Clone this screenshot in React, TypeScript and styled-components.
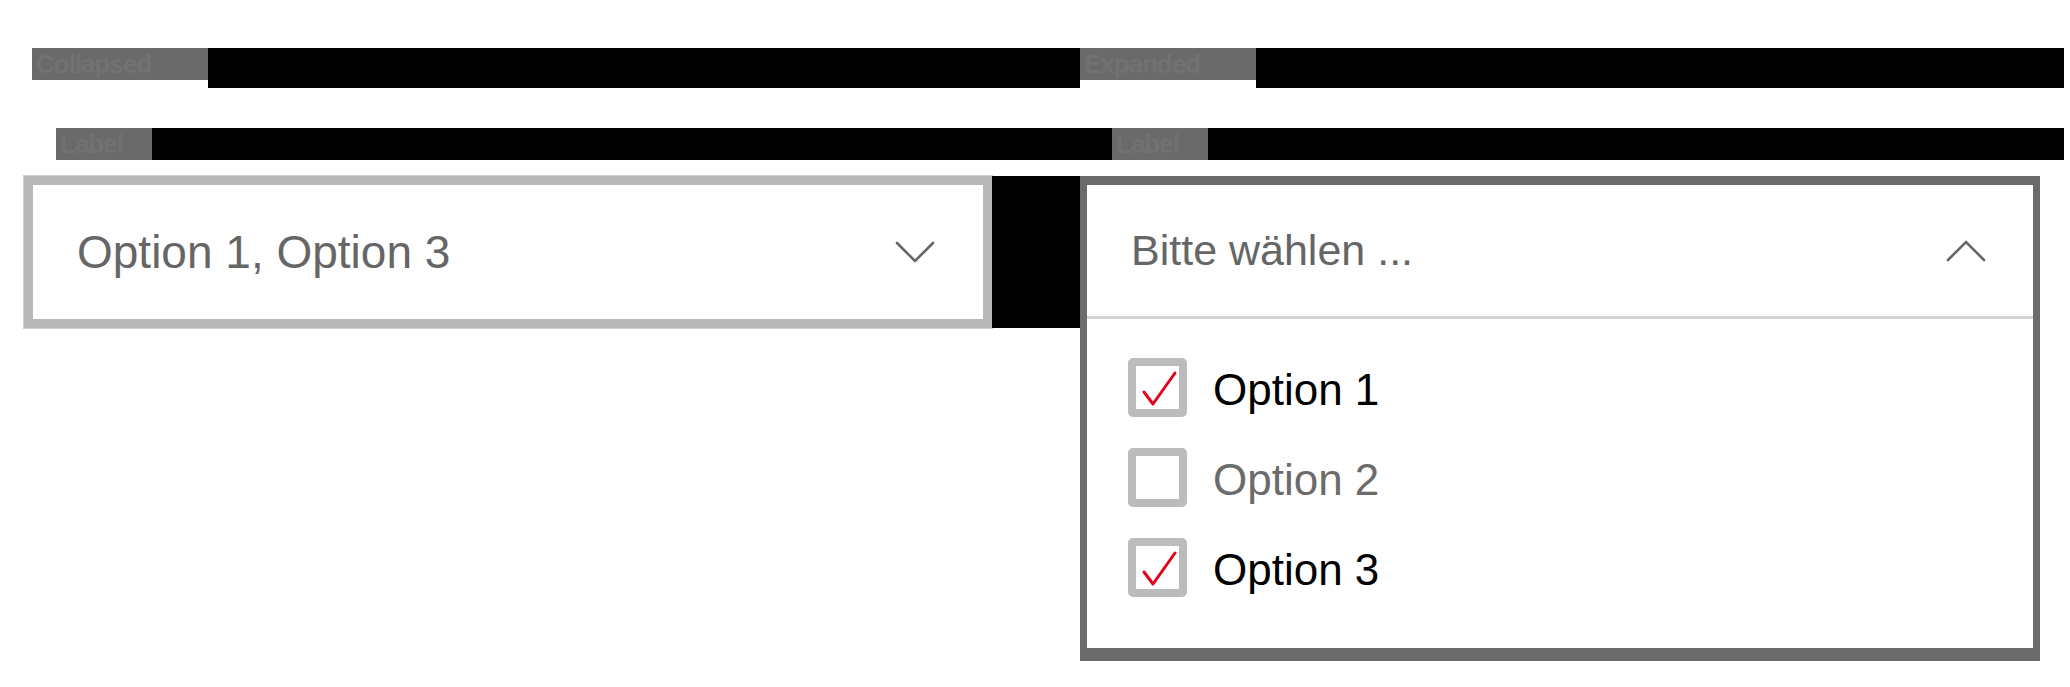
import React from "react";
import styled, { createGlobalStyle } from "styled-components";

const GlobalStyle = createGlobalStyle`
  html, body {
    margin: 0;
    padding: 0;
    background: #ffffff;
    font-family: "Liberation Sans", Arial, Helvetica, sans-serif;
  }
  * { box-sizing: border-box; }
`;

const Page = styled.div`
  width: 2070px;
  height: 687px;
  padding: 48px 0 0 24px;
  display: grid;
  grid-template-columns: 1056px 984px;
  align-items: start;
`;

const Column = styled.section`
  display: flex;
  flex-direction: column;
`;

const HeadingRow = styled.div<{ $inset: number }>`
  display: flex;
  align-items: flex-start;
  height: 40px;
  padding-left: ${(p) => p.$inset}px;
`;

const MaskedText = styled.span<{ $width: number }>`
  display: block;
  flex: none;
  width: ${(p) => p.$width}px;
  height: 32px;
  background: #6a6a6a;
  color: #727272;
  font-weight: 700;
  font-size: 26px;
  line-height: 32px;
  letter-spacing: -1px;
  padding-left: 4px;
  white-space: nowrap;
`;

const BlackFill = styled.div<{ $h: number; $w?: number }>`
  flex: ${(p) => (p.$w ? "none" : "1")};
  width: ${(p) => (p.$w ? `${p.$w}px` : "auto")};
  height: ${(p) => p.$h}px;
  background: #000;
`;

const LabelRow = styled.div<{ $leadBlack: boolean }>`
  display: flex;
  height: 32px;
  margin-top: 40px;
  padding-left: 32px;
  background: ${(p) =>
    p.$leadBlack ? "#000" : "linear-gradient(to right, #fff 32px, #000 32px)"};
`;

const FieldRow = styled.div`
  display: flex;
  align-items: flex-start;
  margin-top: 16px;
`;

const SelectBox = styled.div`
  width: 968px;
  height: 152px;
  border: 9px solid #b9b9b9;
  box-shadow: 0 0 0 1px #d2d2d2;
  background: #fff;
  display: flex;
  align-items: center;
  justify-content: space-between;
  padding: 0 48px 0 44px;
`;

const ValueText = styled.span<{ $size: number }>`
  font-size: ${(p) => p.$size}px;
  color: #666666;
  line-height: 1.15;
`;

const Panel = styled.div`
  width: 960px;
  margin-top: 16px;
  border-style: solid;
  border-color: #6b6b6b;
  border-width: 9px 7px 13px 7px;
  background: #fff;
  display: flex;
  flex-direction: column;
`;

const PanelHeader = styled.div`
  height: 134px;
  display: flex;
  align-items: center;
  justify-content: space-between;
  padding: 0 47px 0 44px;
  border-bottom: 3px solid #d4d4d4;
`;

const OptionList = styled.ul`
  list-style: none;
  margin: 0;
  padding: 39px 0 51px 41px;
  display: flex;
  flex-direction: column;
  gap: 31px;
`;

const OptionItem = styled.li<{ $checked: boolean }>`
  display: flex;
  align-items: center;
  gap: 26px;
  height: 59px;
  font-size: 44px;
  color: ${(p) => (p.$checked ? "#000" : "#6b6b6b")};
`;

const OptionLabel = styled.span`
  padding-top: 4px;
`;

const Box = styled.span`
  flex: none;
  width: 59px;
  height: 59px;
  border: 8px solid #bcbcbc;
  border-radius: 5px;
  background: #fff;
  position: relative;
  display: block;
`;

const CheckSvg = styled.svg`
  position: absolute;
  left: -8px;
  top: -8px;
`;

const Chevron = ({ up }: { up?: boolean }) => (
  <svg width="40" height="22" viewBox="0 0 40 22" aria-hidden="true">
    <path
      d={up ? "M2 20 L20 2 L38 20" : "M2 2 L20 20 L38 2"}
      fill="none"
      stroke="#666"
      strokeWidth="2.6"
      strokeLinecap="round"
      strokeLinejoin="miter"
    />
  </svg>
);

const Checkbox = ({ checked }: { checked: boolean }) => (
  <Box>
    {checked && (
      <CheckSvg width="59" height="59" viewBox="0 0 59 59" aria-hidden="true">
        <path
          d="M16 34 L25 46 L47 15"
          fill="none"
          stroke="#e2001a"
          strokeWidth="3"
          strokeLinecap="round"
          strokeLinejoin="round"
        />
      </CheckSvg>
    )}
  </Box>
);

const options = [
  { label: "Option 1", checked: true },
  { label: "Option 2", checked: false },
  { label: "Option 3", checked: true },
];

export default function App() {
  return (
    <>
      <GlobalStyle />
      <Page>
        <Column>
          <HeadingRow $inset={8}>
            <MaskedText $width={176}>Collapsed</MaskedText>
            <BlackFill $h={40} />
          </HeadingRow>
          <LabelRow $leadBlack={false}>
            <MaskedText $width={96}>Label</MaskedText>
            <BlackFill $h={32} />
          </LabelRow>
          <FieldRow>
            <SelectBox>
              <ValueText $size={46}>Option 1, Option 3</ValueText>
              <Chevron />
            </SelectBox>
            <BlackFill $h={152} $w={88} />
          </FieldRow>
        </Column>
        <Column>
          <HeadingRow $inset={0}>
            <MaskedText $width={176}>Expanded</MaskedText>
            <BlackFill $h={40} />
          </HeadingRow>
          <LabelRow $leadBlack={true}>
            <MaskedText $width={96}>Label</MaskedText>
            <BlackFill $h={32} />
          </LabelRow>
          <Panel>
            <PanelHeader>
              <ValueText $size={43}>Bitte wählen ...</ValueText>
              <Chevron up />
            </PanelHeader>
            <OptionList>
              {options.map((o) => (
                <OptionItem key={o.label} $checked={o.checked}>
                  <Checkbox checked={o.checked} />
                  <OptionLabel>{o.label}</OptionLabel>
                </OptionItem>
              ))}
            </OptionList>
          </Panel>
        </Column>
      </Page>
    </>
  );
}
